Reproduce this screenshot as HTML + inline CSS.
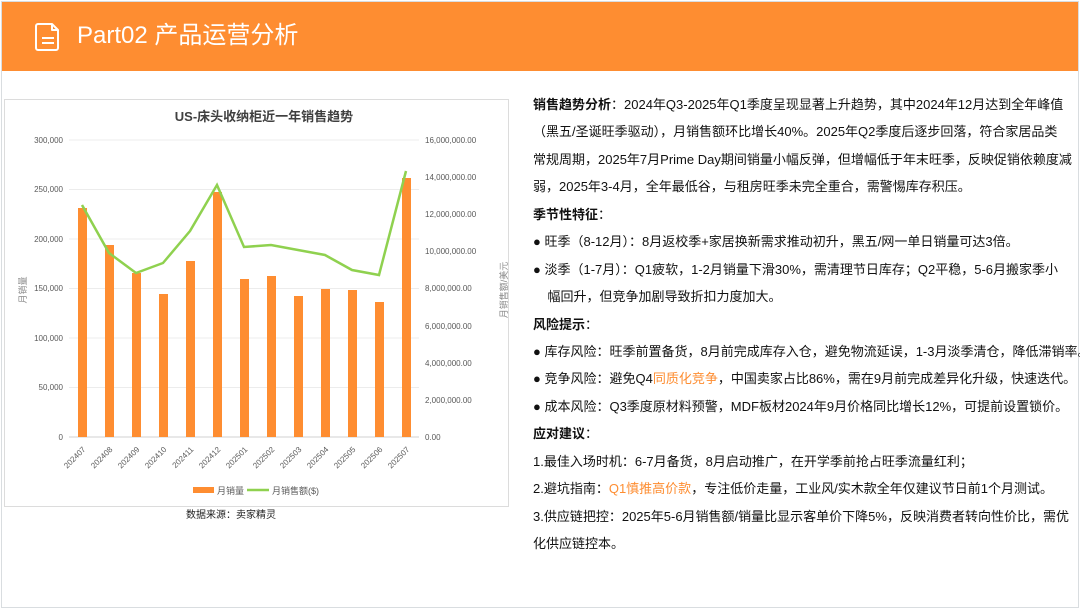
<!DOCTYPE html>
<html><head><meta charset="utf-8"><style>
*{margin:0;padding:0;box-sizing:border-box}
body{width:1080px;height:610px;background:#fff;position:relative;overflow:hidden;font-family:"Liberation Sans","Noto Sans CJK SC",sans-serif;color:#111}
.frame{position:absolute;left:1px;top:1px;width:1078px;height:607px;border:1px solid #d9dde0}
.hdr{position:absolute;left:2px;top:2px;width:1076px;height:69px;background:#fe8d31}
.hdr .t{position:absolute;left:75px;top:16px;font-size:24px;color:#fff;line-height:36px}
.chart{position:absolute;left:4px;top:99px;width:504px;height:407px;border:1px solid #dcdcdc;background:#fff}
.txt{position:absolute;left:533px;top:91px;font-size:13px;}
.txt div{height:27.45px;line-height:27.45px;white-space:nowrap}
.o{color:#fe8d31}
b{font-weight:bold}
</style></head><body>
<div class="frame"></div>
<div class="hdr">
<svg style="position:absolute;left:32px;top:20px" width="28" height="30" viewBox="0 0 28 30" fill="none" stroke="#fff" stroke-width="2" stroke-linejoin="round"><path d="M4 2h14l6 6v18a2 2 0 0 1-2 2H4a2 2 0 0 1-2-2V4a2 2 0 0 1 2-2z"/><path d="M18 2v6h6"/><path d="M8 16h12M8 21h12"/></svg>
<div class="t">Part02 产品运营分析</div>
</div>
<svg style="position:absolute;left:0;top:0" width="520" height="530" font-family="Liberation Sans, Noto Sans CJK SC, sans-serif">
<rect x="4.5" y="99.5" width="504" height="407" fill="#fff" stroke="#dcdcdc"/>
<text x="264" y="121" font-size="13" font-weight="bold" fill="#404040" text-anchor="middle">US-床头收纳柜近一年销售趋势</text>
<g stroke="#ececec" stroke-width="1">
<line x1="69" y1="140" x2="419" y2="140"/><line x1="69" y1="189.5" x2="419" y2="189.5"/><line x1="69" y1="239" x2="419" y2="239"/><line x1="69" y1="288.5" x2="419" y2="288.5"/><line x1="69" y1="338" x2="419" y2="338"/><line x1="69" y1="387.5" x2="419" y2="387.5"/></g>
<line x1="69" y1="437" x2="419" y2="437" stroke="#d0d0d0"/>
<g font-size="8" fill="#595959" text-anchor="end">
<text x="63" y="143">300,000</text><text x="63" y="192">250,000</text><text x="63" y="242">200,000</text><text x="63" y="291">150,000</text><text x="63" y="341">100,000</text><text x="63" y="390">50,000</text><text x="63" y="440">0</text></g>
<g font-size="8" fill="#595959">
<text x="425" y="143">16,000,000.00</text><text x="425" y="180">14,000,000.00</text><text x="425" y="217">12,000,000.00</text><text x="425" y="254">10,000,000.00</text><text x="425" y="291">8,000,000.00</text><text x="425" y="329">6,000,000.00</text><text x="425" y="366">4,000,000.00</text><text x="425" y="403">2,000,000.00</text><text x="425" y="440">0.00</text></g>
<text transform="translate(26,290) rotate(-90)" font-size="9" fill="#8a8a8a" text-anchor="middle">月销量</text>
<text transform="translate(507,290) rotate(-90)" font-size="9" fill="#8a8a8a" text-anchor="middle">月销售额/美元</text>
<g fill="#fe8d31">
<rect x="78" y="208" width="9" height="229"/><rect x="105" y="245" width="9" height="192"/><rect x="132" y="273" width="9" height="164"/><rect x="159" y="294" width="9" height="143"/><rect x="186" y="261" width="9" height="176"/><rect x="213" y="192" width="9" height="245"/><rect x="240" y="279" width="9" height="158"/><rect x="267" y="276" width="9" height="161"/><rect x="294" y="296" width="9" height="141"/><rect x="321" y="289" width="9" height="148"/><rect x="348" y="290" width="9" height="147"/><rect x="375" y="302" width="9" height="135"/><rect x="402" y="178" width="9" height="259"/></g>
<polyline fill="none" stroke="#8fd14f" stroke-width="2.5" points="82,205 109,253 136,273 163,263 190,231 217,185 244,247 271,245 298,250 325,255 352,270 379,275 406,171"/>
<g font-size="8" fill="#595959" text-anchor="end">
<text transform="translate(86,450) rotate(-45)">202407</text><text transform="translate(113,450) rotate(-45)">202408</text><text transform="translate(140,450) rotate(-45)">202409</text><text transform="translate(167,450) rotate(-45)">202410</text><text transform="translate(194,450) rotate(-45)">202411</text><text transform="translate(221,450) rotate(-45)">202412</text><text transform="translate(248,450) rotate(-45)">202501</text><text transform="translate(275,450) rotate(-45)">202502</text><text transform="translate(302,450) rotate(-45)">202503</text><text transform="translate(329,450) rotate(-45)">202504</text><text transform="translate(356,450) rotate(-45)">202505</text><text transform="translate(383,450) rotate(-45)">202506</text><text transform="translate(410,450) rotate(-45)">202507</text></g>
<rect x="193" y="487" width="21" height="6" fill="#fe8d31"/>
<text x="217" y="494" font-size="9" fill="#595959">月销量</text>
<line x1="247" y1="490" x2="269" y2="490" stroke="#8fd14f" stroke-width="2.5"/>
<text x="272" y="494" font-size="9" fill="#595959">月销售额($)</text>
<text x="231" y="518" font-size="10" fill="#222" text-anchor="middle">数据来源：卖家精灵</text>
</svg>
<div class="txt">
<div><b>销售趋势分析</b>：2024年Q3-2025年Q1季度呈现显著上升趋势，其中2024年12月达到全年峰值</div>
<div>（黑五/圣诞旺季驱动），月销售额环比增长40%。2025年Q2季度后逐步回落，符合家居品类</div>
<div>常规周期，2025年7月Prime Day期间销量小幅反弹，但增幅低于年末旺季，反映促销依赖度减</div>
<div>弱，2025年3-4月，全年最低谷，与租房旺季未完全重合，需警惕库存积压。</div>
<div><b>季节性特征</b>：</div>
<div>● 旺季（8-12月）：8月返校季+家居换新需求推动初升，黑五/网一单日销量可达3倍。</div>
<div>● 淡季（1-7月）：Q1疲软，1-2月销量下滑30%，需清理节日库存；Q2平稳，5-6月搬家季小</div>
<div>&nbsp;&nbsp;&nbsp;&nbsp;幅回升，但竞争加剧导致折扣力度加大。</div>
<div><b>风险提示</b>：</div>
<div>● 库存风险：旺季前置备货，8月前完成库存入仓，避免物流延误，1-3月淡季清仓，降低滞销率。</div>
<div>● 竞争风险：避免Q4<span class="o">同质化竞争</span>，中国卖家占比86%，需在9月前完成差异化升级，快速迭代。</div>
<div>● 成本风险：Q3季度原材料预警，MDF板材2024年9月价格同比增长12%，可提前设置锁价。</div>
<div><b>应对建议</b>：</div>
<div>1.最佳入场时机：6-7月备货，8月启动推广，在开学季前抢占旺季流量红利；</div>
<div>2.避坑指南：<span class="o">Q1慎推高价款</span>，专注低价走量，工业风/实木款全年仅建议节日前1个月测试。</div>
<div>3.供应链把控：2025年5-6月销售额/销量比显示客单价下降5%，反映消费者转向性价比，需优</div>
<div>化供应链控本。</div>
</div>
</body></html>
